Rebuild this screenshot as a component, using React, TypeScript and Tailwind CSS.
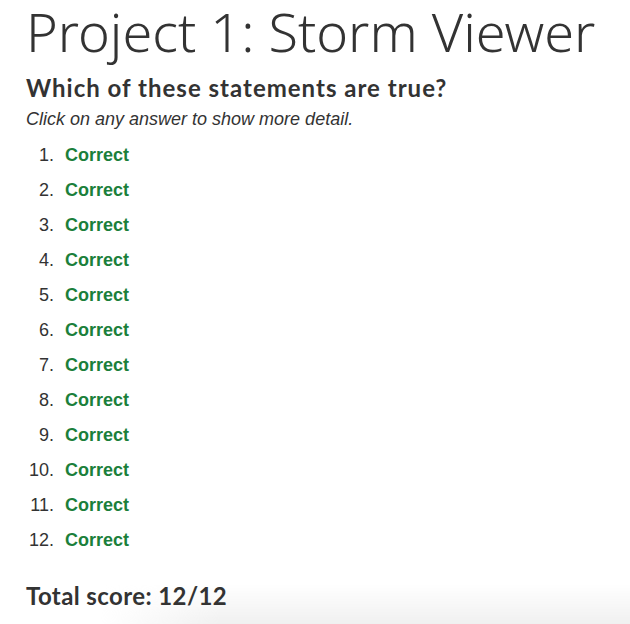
import React from "react";

const items = Array.from({ length: 12 }, (_, i) => i + 1);

export default function App() {
  return (
    <div className="relative min-h-[624px] w-[630px] overflow-hidden bg-white text-[#333333]">
      <div className="pointer-events-none absolute bottom-0 left-[100px] right-0 h-[40px] bg-gradient-to-b from-transparent to-[#f0f0f0] [mask-image:linear-gradient(to_right,transparent,black_120px)]" />
      <div className="relative px-[26px]">
        <h1 className="whitespace-nowrap font-['Noto_Sans',sans-serif] text-[54px] font-light leading-[62px]">
          Project 1: Storm Viewer
        </h1>
        <h2 className="mt-[11px] font-['Lato',sans-serif] text-[24px] font-bold leading-[30px] tracking-[1px]">
          Which of these statements are true?
        </h2>
        <p className="mt-[4px] font-['Liberation_Sans',sans-serif] text-[18px] italic leading-[24px]">
          Click on any answer to show more detail.
        </p>
        <ol className="mt-[7px] font-['Liberation_Sans',sans-serif] text-[18px]">
          {items.map((n) => (
            <li key={n} className="flex h-[35px] items-center">
              <span className="w-[28px] text-right">{n}.</span>
              <span className="ml-[11px] font-bold text-[#1b7f3b]">Correct</span>
            </li>
          ))}
        </ol>
        <div className="mt-[23px] font-['Lato',sans-serif] text-[24px] font-bold leading-[30px] tracking-[0.4px]">
          Total score: 12/12
        </div>
      </div>
    </div>
  );
}
